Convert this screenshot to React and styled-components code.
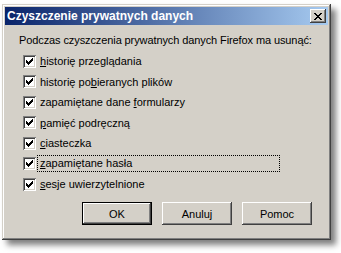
import React from 'react';
import styled, { createGlobalStyle } from 'styled-components';

const Global = createGlobalStyle`
  html, body { margin: 0; padding: 0; background: #fff; }
  body { font-family: "Liberation Sans", Arial, sans-serif; }
`;

const Page = styled.div`
  padding: 4px 0 0 2px;
  width: 341px;
  height: 253px;
  box-sizing: border-box;
`;

const Dialog = styled.div`
  width: 329px;
  height: 236px;
  box-sizing: border-box;
  padding: 3px;
  background: #d4d0c8;
  display: flex;
  flex-direction: column;
  box-shadow: inset -1px -1px #404040, inset 1px 1px #d4d0c8,
    inset -2px -2px #808080, inset 2px 2px #fff,
    5px 5px 6px rgba(0, 0, 0, 0.5);
`;

const TitleBar = styled.div`
  height: 18px;
  display: flex;
  align-items: center;
  justify-content: space-between;
  padding: 0 2px;
  background: linear-gradient(to right, #0a246a, #a6caf0);
`;

const Title = styled.span`
  color: #fff;
  font-weight: bold;
  font-size: 12px;
  white-space: nowrap;
`;

const CloseBtn = styled.div`
  width: 16px;
  height: 14px;
  background: #d4d0c8;
  display: flex;
  align-items: center;
  justify-content: center;
  box-shadow: inset -1px -1px #404040, inset 1px 1px #fff,
    inset -2px -2px #808080, inset 2px 2px #d4d0c8;
`;

const Body = styled.div`
  flex: 1;
  display: flex;
  flex-direction: column;
  padding: 8px 16px 12px 14px;
  font-size: 11px;
  color: #000;
  white-space: nowrap;
`;

const Intro = styled.div`
  height: 14px;
  line-height: 14px;
  letter-spacing: -0.1px;
`;

const List = styled.div`
  margin-top: 4px;
  padding-left: 4px;
  display: flex;
  flex-direction: column;
`;

const Row = styled.div`
  height: 20.5px;
  display: flex;
  align-items: center;
`;

const Box = styled.div`
  width: 13px;
  height: 13px;
  flex: none;
  background: #fff;
  display: flex;
  align-items: center;
  justify-content: center;
  box-shadow: inset 1px 1px #808080, inset -1px -1px #fff,
    inset 2px 2px #404040, inset -2px -2px #d4d0c8;
`;

const Label = styled.span`
  margin-left: ${(p) => (p.focused ? '1px' : '4px')};
  height: 14px;
  line-height: 14px;
  box-sizing: border-box;
  ${(p) =>
    p.focused &&
    `
    width: 243px;
    height: 17px;
    line-height: 15px;
    padding-left: 2px;
    border: 1px dotted #000;
  `}
`;

const Buttons = styled.div`
  margin-top: auto;
  display: flex;
  justify-content: flex-end;
  gap: 10px;
`;

const Button = styled.div`
  width: 70px;
  height: 23px;
  box-sizing: border-box;
  display: flex;
  align-items: center;
  justify-content: center;
  background: #d4d0c8;
  ${(p) => (p.primary ? 'border: 1px solid #000;' : '')}
  box-shadow: inset -1px -1px #404040, inset 1px 1px #fff,
    inset -2px -2px #808080, inset 2px 2px #d4d0c8;
`;

const Check = () => {
  const cols = [2, 3, 4, 3, 2, 1, 0];
  return (
    <svg width="7" height="7" viewBox="0 0 7 7" shapeRendering="crispEdges">
      {cols.map((y, x) => (
        <rect key={x} x={x} y={y} width="1" height="3" fill="#000" />
      ))}
    </svg>
  );
};

const CloseGlyph = () => {
  const rows = ['xx....xx', '.xx..xx.', '..xxxx..', '...xx...', '..xxxx..', '.xx..xx.', 'xx....xx'];
  return (
    <svg width="8" height="7" viewBox="0 0 8 7" shapeRendering="crispEdges">
      {rows.flatMap((r, y) =>
        r.split('').map((c, x) =>
          c === 'x' ? <rect key={`${x}-${y}`} x={x} y={y} width="1" height="1" fill="#000" /> : null
        )
      )}
    </svg>
  );
};

const items = [
  ['', 'h', 'istorię przeglądania'],
  ['historię po', 'b', 'ieranych plików'],
  ['zapamiętane dane ', 'f', 'ormularzy'],
  ['', 'p', 'amięć podręczną'],
  ['', 'c', 'iasteczka'],
  ['', 'z', 'apamiętane hasła'],
  ['', 's', 'esje uwierzytelnione'],
];

export default function App() {
  return (
    <Page>
      <Global />
      <Dialog>
        <TitleBar>
          <Title>Czyszczenie prywatnych danych</Title>
          <CloseBtn>
            <CloseGlyph />
          </CloseBtn>
        </TitleBar>
        <Body>
          <Intro>Podczas czyszczenia prywatnych danych Firefox ma usunąć:</Intro>
          <List>
            {items.map(([a, k, b], i) => (
              <Row key={i}>
                <Box>
                  <Check />
                </Box>
                <Label focused={i === 5}>
                  {a}
                  <u>{k}</u>
                  {b}
                </Label>
              </Row>
            ))}
          </List>
          <Buttons>
            <Button primary>OK</Button>
            <Button>Anuluj</Button>
            <Button>Pomoc</Button>
          </Buttons>
        </Body>
      </Dialog>
    </Page>
  );
}
